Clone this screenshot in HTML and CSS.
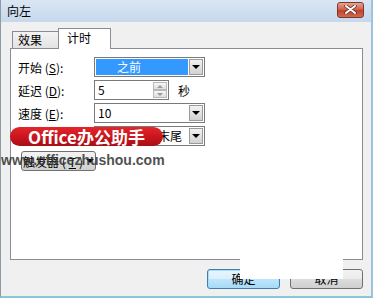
FILE: index.html
```html
<!DOCTYPE html>
<html lang="zh-CN">
<head>
    <meta charset="UTF-8">
    <title>向左</title>
    <link rel="stylesheet" href="styles.css">
</head>
<body>
    <div class="window">
        <div class="titlebar">
            <span class="title">向左</span>
            <span class="close">
                <svg width="13" height="9" viewBox="0 0 13 9">
                    <path d="M2 1 L11 8 M11 1 L2 8" stroke="#5a2a20" stroke-width="3.4" stroke-linecap="round"/>
                    <path d="M2 1 L11 8 M11 1 L2 8" stroke="#ffffff" stroke-width="2" stroke-linecap="round"/>
                </svg>
            </span>
        </div>

        <div class="client">
            <div class="tabs">
                <div class="tab">效果</div>
                <div class="tab active">计时</div>
            </div>

            <div class="panel">
                <div class="row">
                    <span class="label">开始 (<u>S</u>):</span>
                    <div class="combo">
                        <span class="value selected">之前</span>
                        <span class="drop"><i></i></span>
                    </div>
                </div>
                <div class="row">
                    <span class="label">延迟 (<u>D</u>):</span>
                    <div class="spin">
                        <span class="value">5</span>
                        <span class="spin-btns">
                            <span class="up"></span>
                            <span class="down"></span>
                        </span>
                    </div>
                    <span class="unit">秒</span>
                </div>
                <div class="row">
                    <span class="label">速度 (<u>E</u>):</span>
                    <div class="combo">
                        <span class="value">10</span>
                        <span class="drop"><i></i></span>
                    </div>
                </div>
                <div class="row">
                    <span class="label">重复 (<u>R</u>):</span>
                    <div class="combo">
                        <span class="value">直到幻灯片末尾</span>
                        <span class="drop"><i></i></span>
                    </div>
                </div>
                <button class="trigger">触发器 (<u>T</u>) <i class="arrow"></i></button>
            </div>

            <div class="actions">
                <button class="btn default">确定</button>
                <button class="btn">取消</button>
            </div>
        </div>

        <!-- watermark overlays -->
        <div class="mark-pill">Office办公助手</div>
        <div class="mark-url">www.officezhushou.com</div>
        <div class="mark-cover"></div>
    </div>
</body>
</html>
```

FILE: styles.css
```css
body {
    margin: 0;
    font-family: "Noto Sans CJK SC", "Liberation Sans", sans-serif;
    font-size: 12px;
    color: #000000;
}

.window {
    position: relative;
    width: 373px;
    height: 298px;
    box-sizing: border-box;
    background-color: #f0f0f0;
    border-left: 1px solid #8d9aa8;
    border-right: 2px solid #9cc3e0;
    border-bottom: 2px solid #86c7dc;
    overflow: hidden;
}

.titlebar {
    height: 22px;
    display: flex;
    align-items: center;
    justify-content: space-between;
    padding: 0 7px 0 6px;
    background: linear-gradient(#dae6f3, #c6d8ec);
}

.title {
    font-size: 12px;
    line-height: 14px;
}

.close {
    width: 25px;
    height: 14px;
    margin-top: -3px;
    display: flex;
    align-items: center;
    justify-content: center;
    border: 1px solid #7b382b;
    border-radius: 3px;
    background: linear-gradient(#e6a593, #cd5a45 50%, #c0402a 51%, #d06a52);
}

.client {
    padding: 7px 9px 0 9px;
}

.tabs {
    display: flex;
    align-items: flex-end;
    margin-left: 2px;
    height: 19px;
}

.tab {
    width: 40px;
    height: 16px;
    line-height: 16px;
    border: 1px solid #898c95;
    border-bottom: none;
    background: linear-gradient(#f3f3f3, #e3e3e3);
    padding-left: 5px;
}

.tab.active {
    width: 43px;
    height: 20px;
    line-height: 17px;
    margin-left: -1px;
    margin-bottom: -1px;
    padding-left: 8px;
    background: #ffffff;
    position: relative;
    z-index: 1;
}

.panel {
    width: 344px;
    height: 202px;
    border: 1px solid #898c95;
    background: #ffffff;
    padding: 8px 0 0 7px;
}

.row {
    display: flex;
    align-items: center;
    height: 20px;
    margin-bottom: 3px;
}

.label {
    width: 76px;
}

.combo,
.spin {
    display: flex;
    height: 20px;
    box-sizing: border-box;
    border: 1px solid #7a7a7a;
    background: #ffffff;
}

.combo {
    width: 111px;
}

.spin {
    width: 75px;
}

.value {
    flex: 1;
    line-height: 18px;
    padding-left: 3px;
}

.value.selected {
    margin: 1px 0 1px 1px;
    line-height: 16px;
    padding-left: 21px;
    background: #3399ff;
    color: #ffffff;
}

.drop {
    width: 12px;
    margin: 1px;
    border: 1px solid #9a9a9a;
    background: linear-gradient(#f2f2f2, #d2d2d2);
    display: flex;
    align-items: center;
    justify-content: center;
}

.drop i,
.trigger .arrow {
    width: 0;
    height: 0;
    border-left: 4px solid transparent;
    border-right: 4px solid transparent;
    border-top: 4px solid #000000;
}

.spin-btns {
    width: 14px;
    margin: 1px;
    display: flex;
    flex-direction: column;
}

.spin-btns span {
    flex: 1;
    border: 1px solid #b8b8b8;
    background: linear-gradient(#f6f6f6, #dedede);
    display: flex;
    align-items: center;
    justify-content: center;
}

.spin-btns span::before {
    content: "";
    border-left: 3px solid transparent;
    border-right: 3px solid transparent;
}

.spin-btns .up::before {
    border-bottom: 3px solid #9a9a9a;
}

.spin-btns .down::before {
    border-top: 3px solid #9a9a9a;
}

.unit {
    margin-left: 9px;
}

.trigger {
    margin: 5px 0 0 3px;
    width: 75px;
    height: 20px;
    padding: 0;
    font-family: inherit;
    font-size: 12px;
    border: 1px solid #707070;
    border-radius: 3px;
    background: linear-gradient(#f2f2f2, #ebebeb 50%, #dddddd 51%, #cfcfcf);
    display: flex;
    align-items: center;
    justify-content: center;
    gap: 3px;
}

.actions {
    display: flex;
    justify-content: flex-end;
    gap: 10px;
    margin: 9px -1px 0 0;
}

.btn {
    width: 73px;
    height: 20px;
    padding: 0;
    font-family: inherit;
    font-size: 12px;
    line-height: 16px;
    border: 1px solid #707070;
    border-radius: 3px;
    background: linear-gradient(#f2f2f2, #ebebeb 50%, #dddddd 51%, #cfcfcf);
}

.btn.default {
    border-color: #3c7fb1;
    box-shadow: inset 0 0 0 1px #a9dcf5;
    background: linear-gradient(#eaf6fd, #d9f0fc 50%, #bee6fd 51%, #a7d9f5);
}

.mark-pill {
    position: absolute;
    left: 9px;
    top: 127px;
    width: 153px;
    height: 19px;
    border-radius: 10px;
    background: linear-gradient(#e3262c, #c8141c 55%, #a80f16);
    color: #ffffff;
    font-family: "Noto Sans CJK SC", sans-serif;
    font-weight: bold;
    font-size: 17px;
    line-height: 19px;
    text-align: center;
}

.mark-url {
    position: absolute;
    left: 0;
    top: 152px;
    color: #333333;
    font-family: "Liberation Sans", sans-serif;
    font-weight: bold;
    font-size: 14px;
    line-height: 17px;
    opacity: 0.85;
}

.mark-cover {
    position: absolute;
    left: 239px;
    top: 250px;
    width: 103px;
    height: 29px;
    background: #ffffff;
}
```
